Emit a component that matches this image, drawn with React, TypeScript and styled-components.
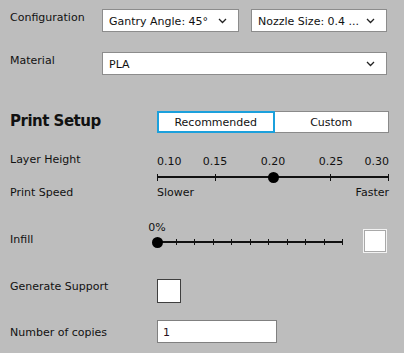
import React from "react";
import styled, { createGlobalStyle } from "styled-components";

const GlobalStyle = createGlobalStyle`
  html, body {
    margin: 0;
    padding: 0;
    background: #bdbdbd;
  }
  body {
    font-family: "DejaVu Sans", "Liberation Sans", sans-serif;
    font-size: 11px;
    color: #111;
  }
`;

const Page = styled.div`
  width: 404px;
  height: 353px;
  box-sizing: border-box;
  padding: 9px 17px 0 10px;
  display: flex;
  flex-direction: column;
  overflow: hidden;
`;

const Row = styled.div<{ $label: number; $top?: number }>`
  display: grid;
  grid-template-columns: ${(p) => p.$label}px 1fr;
  align-items: start;
  margin-top: ${(p) => p.$top ?? 0}px;
`;

const Label = styled.div<{ $pad?: number }>`
  line-height: 13px;
  padding-top: ${(p) => p.$pad ?? 1}px;
  white-space: nowrap;
`;

const Title = styled.div`
  font-size: 15px;
  font-weight: bold;
  letter-spacing: -0.5px;
  line-height: 18px;
  padding-top: 1px;
`;

const ComboGroup = styled.div`
  display: flex;
  gap: 12px;
`;

const Combo = styled.div<{ $width: number }>`
  width: ${(p) => p.$width}px;
  height: 23px;
  box-sizing: border-box;
  border: 1px solid #8c8c8c;
  background: #fff;
  display: flex;
  align-items: center;
  justify-content: space-between;
  padding: 1px 11px 0 6px;
  white-space: nowrap;
`;

const Chevron = () => (
  <svg width="9" height="6" viewBox="0 0 9 6">
    <polyline points="1,1 4.5,4.5 8,1" fill="none" stroke="#222" strokeWidth="1.3" />
  </svg>
);

const Toggle = styled.div`
  display: flex;
  width: 232px;
  height: 22px;
`;

const ToggleButton = styled.div<{ $active?: boolean }>`
  flex: 1;
  box-sizing: border-box;
  background: #fff;
  border: ${(p) => (p.$active ? "2px solid #1ba0dc" : "1px solid #8a8a8a")};
  border-left-width: ${(p) => (p.$active ? "2px" : "0")};
  display: flex;
  align-items: center;
  justify-content: center;
  padding-top: 1px;
`;

const SliderBlock = styled.div<{ $width: number; $pad?: number }>`
  width: ${(p) => p.$width}px;
  padding-top: ${(p) => p.$pad ?? 0}px;
  display: flex;
  flex-direction: column;
`;

const TickLabels = styled.div`
  display: flex;
  justify-content: space-between;
  line-height: 13px;
`;

const TickLabel = styled.div<{ $align: string }>`
  width: 0;
  display: flex;
  justify-content: ${(p) => p.$align};
  white-space: nowrap;
`;

const Track = styled.div<{ $gap?: number }>`
  position: relative;
  height: 12px;
  margin-top: ${(p) => p.$gap ?? 3}px;
  display: flex;
  justify-content: space-between;
  align-items: center;
  background: linear-gradient(#111, #111) center / 100% 2px no-repeat;
`;

const Tick = styled.span<{ $h: number }>`
  width: 1px;
  height: ${(p) => p.$h}px;
  background: #111;
`;

const Handle = styled.span`
  position: absolute;
  top: 0.5px;
  width: 11px;
  height: 11px;
  margin-left: -5px;
  border-radius: 50%;
  background: #000;
`;

const SpeedScale = styled.div`
  display: flex;
  justify-content: space-between;
  line-height: 13px;
  width: 232px;
`;

const InfillArea = styled.div`
  display: flex;
  justify-content: space-between;
  align-items: flex-start;
  width: 230px;
`;

const PercentLabel = styled.div`
  line-height: 13px;
  width: 0;
  display: flex;
  justify-content: center;
`;

const Box = styled.div<{ $light?: boolean; $top?: number }>`
  width: 24px;
  height: 24px;
  margin-top: ${(p) => p.$top ?? 0}px;
  box-sizing: border-box;
  background: #fff;
  border: 1px solid ${(p) => (p.$light ? "#f2f2f2" : "#3f3f3f")};
  box-shadow: ${(p) => (p.$light ? "inset 0 0 0 1px #a9a9a9, inset 0 0 0 2px #fff" : "none")};
`;

const SpinInput = styled.div`
  width: 120px;
  height: 23px;
  box-sizing: border-box;
  border: 1px solid #808080;
  background: #fff;
  padding: 1px 0 0 5px;
  display: flex;
  align-items: center;
  color: #2a1020;
`;

const layerValues = ["0.10", "0.15", "0.20", "0.25", "0.30"];

const alignFor = (i: number, n: number) =>
  i === 0 ? "flex-start" : i === n - 1 ? "flex-end" : "center";

export default function App() {
  const layerPos = (2 / 4) * 100;
  const infillPos = 0;

  return (
    <>
      <GlobalStyle />
      <Page>
        <Row $label={92}>
          <Label $pad={2}>Configuration</Label>
          <ComboGroup>
            <Combo $width={137}>
              <span>Gantry Angle: 45°</span>
              <Chevron />
            </Combo>
            <Combo $width={136}>
              <span>Nozzle Size: 0.4 ...</span>
              <Chevron />
            </Combo>
          </ComboGroup>
        </Row>

        <Row $label={92} $top={20}>
          <Label $pad={2}>Material</Label>
          <Combo $width={285}>
            <span>PLA</span>
            <Chevron />
          </Combo>
        </Row>

        <Row $label={147} $top={36}>
          <Title>Print Setup</Title>
          <Toggle>
            <ToggleButton $active>Recommended</ToggleButton>
            <ToggleButton>Custom</ToggleButton>
          </Toggle>
        </Row>

        <Row $label={147} $top={19}>
          <Label>Layer Height</Label>
          <SliderBlock $width={232} $pad={3}>
            <TickLabels>
              {layerValues.map((v, i) => (
                <TickLabel key={v} $align={alignFor(i, layerValues.length)}>
                  {v}
                </TickLabel>
              ))}
            </TickLabels>
            <Track>
              {layerValues.map((v) => (
                <Tick key={v} $h={7} />
              ))}
              <Handle style={{ left: `${layerPos}%` }} />
            </Track>
          </SliderBlock>
        </Row>

        <Row $label={147} $top={3}>
          <Label $pad={0}>Print Speed</Label>
          <SpeedScale>
            <span>Slower</span>
            <span>Faster</span>
          </SpeedScale>
        </Row>

        <Row $label={147} $top={22}>
          <Label $pad={12}>Infill</Label>
          <InfillArea>
            <SliderBlock $width={186}>
              <PercentLabel>0%</PercentLabel>
              <Track $gap={2}>
                {Array.from({ length: 11 }).map((_, i) => (
                  <Tick key={i} $h={6} />
                ))}
                <Handle style={{ left: `${infillPos}%` }} />
              </Track>
            </SliderBlock>
            <Box $light $top={8} />
          </InfillArea>
        </Row>

        <Row $label={147} $top={26}>
          <Label $pad={1}>Generate Support</Label>
          <Box />
        </Row>

        <Row $label={147} $top={17}>
          <Label $pad={6}>Number of copies</Label>
          <SpinInput>1</SpinInput>
        </Row>
      </Page>
    </>
  );
}
